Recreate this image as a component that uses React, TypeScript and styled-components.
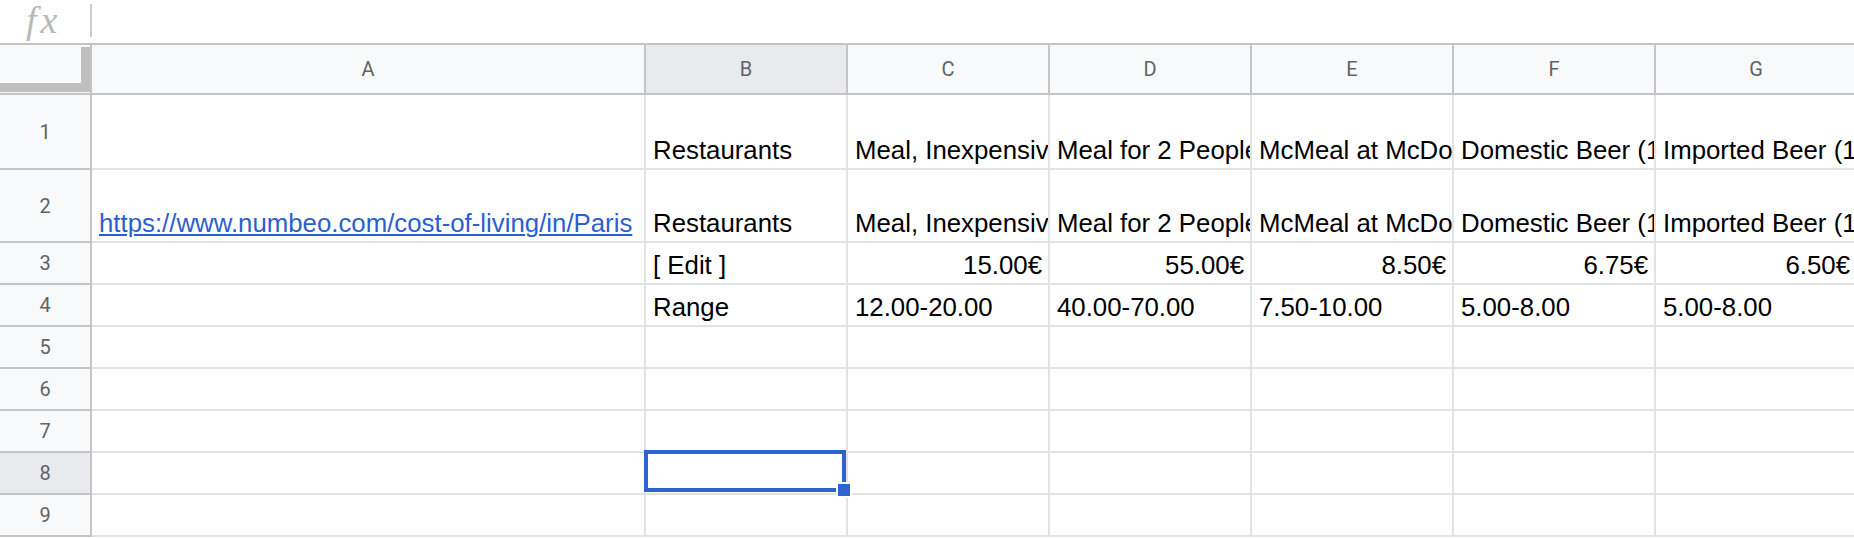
import React from "react";
import styled, { createGlobalStyle } from "styled-components";

const GlobalStyle = createGlobalStyle`
  html, body {
    margin: 0;
    padding: 0;
    background: #fff;
    overflow: hidden;
  }
  body {
    font-family: "Liberation Sans", Arial, sans-serif;
  }
`;

const Page = styled.div`
  width: 1854px;
  height: 538px;
  overflow: hidden;
  background: #fff;
`;

const FormulaBar = styled.div`
  display: flex;
  align-items: flex-start;
  height: 45px;
  box-sizing: border-box;
  border-bottom: 2px solid #c4c4c4;
`;

const FxLabel = styled.span`
  width: 90px;
  height: 43px;
  padding-left: 26px;
  box-sizing: border-box;
  font-family: "Liberation Serif", "DejaVu Serif", serif;
  font-style: italic;
  font-size: 38px;
  line-height: 40px;
  letter-spacing: 4px;
  color: #b9b9b9;
`;

const Divider = styled.div`
  width: 2px;
  height: 33px;
  margin-top: 4px;
  background: #cccccc;
`;

const Grid = styled.div`
  display: grid;
  grid-template-columns: 92px 554px repeat(6, 202px);
  grid-template-rows: 50px 75px 73px repeat(7, 42px);
`;

const Corner = styled.div`
  display: flex;
  box-sizing: border-box;
  padding-top: 2px;
  background: #f8f9fa;
  border-right: 2px solid #c4c4c4;
  border-bottom: 2px solid #c4c4c4;
`;

const FreezeBars = styled.div`
  flex: 1;
  margin-bottom: 1px;
  border-right: 9px solid #bfbfbf;
  border-bottom: 9px solid #bfbfbf;
`;

const ColHeader = styled.div<{ $selected?: boolean }>`
  display: flex;
  align-items: center;
  justify-content: center;
  box-sizing: border-box;
  background: ${p => (p.$selected ? "#e8eaed" : "#f8f9fa")};
  border-right: 2px solid #c4c4c4;
  border-bottom: 2px solid #c4c4c4;
  font-family: Roboto, "Liberation Sans", sans-serif;
  font-size: 20px;
  color: #5f6368;
`;

const RowHeader = styled(ColHeader)``;

const Cell = styled.div<{ $align?: "left" | "right"; $active?: boolean }>`
  position: relative;
  display: flex;
  align-items: flex-end;
  justify-content: ${p => (p.$align === "right" ? "flex-end" : "flex-start")};
  box-sizing: border-box;
  padding: 0 6px 3px 7px;
  border-right: 2px solid #e2e2e2;
  border-bottom: 2px solid #e2e2e2;
  overflow: ${p => (p.$active ? "visible" : "hidden")};
  z-index: ${p => (p.$active ? 2 : "auto")};
  white-space: nowrap;
  font-size: 25.8px;
  line-height: 30px;
  color: #000;
`;

const Link = styled.a`
  color: #2b5fce;
  text-decoration: underline;
  text-decoration-thickness: 2px;
  text-underline-offset: 2px;
`;

const Selection = styled.div`
  position: absolute;
  top: -3px;
  left: -2px;
  right: 0;
  bottom: 1px;
  border: 4px solid #2d64d2;
  pointer-events: none;
`;

const FillHandle = styled.div`
  position: absolute;
  right: -6px;
  bottom: -5px;
  width: 12px;
  height: 12px;
  background: #2d64d2;
  border: 2px solid #fff;
`;

type CellData = { text?: string; align?: "left" | "right"; href?: string };

const columns = ["A", "B", "C", "D", "E", "F", "G"];

const titles = [
  "Restaurants",
  "Meal, Inexpensive Restaurant",
  "Meal for 2 People, Mid-range Restaurant, Three-course",
  "McMeal at McDonalds (or Equivalent Combo Meal)",
  "Domestic Beer (1 pint draught)",
  "Imported Beer (12 oz small bottle)",
];

const url = "https://www.numbeo.com/cost-of-living/in/Paris";

const rows: CellData[][] = [
  [{}, ...titles.map(t => ({ text: t }))],
  [{ text: url, href: url }, ...titles.map(t => ({ text: t }))],
  [
    {},
    { text: "[ Edit ]" },
    ...["15.00€", "55.00€", "8.50€", "6.75€", "6.50€"].map(t => ({ text: t, align: "right" as const })),
  ],
  [
    {},
    ...["Range", "12.00-20.00", "40.00-70.00", "7.50-10.00", "5.00-8.00", "5.00-8.00"].map(t => ({ text: t })),
  ],
  [], [], [], [], [],
];

const selected = { row: 8, col: "B" };

export default function App() {
  return (
    <Page>
      <GlobalStyle />
      <FormulaBar>
        <FxLabel>fx</FxLabel>
        <Divider />
      </FormulaBar>
      <Grid>
        <Corner>
          <FreezeBars />
        </Corner>
        {columns.map(c => (
          <ColHeader key={c} $selected={c === selected.col}>
            {c}
          </ColHeader>
        ))}
        {rows.map((row, ri) => {
          const rowNum = ri + 1;
          return (
            <React.Fragment key={rowNum}>
              <RowHeader $selected={rowNum === selected.row}>{rowNum}</RowHeader>
              {columns.map((c, ci) => {
                const cell = row[ci] || {};
                const active = rowNum === selected.row && c === selected.col;
                return (
                  <Cell key={c} $align={cell.align} $active={active}>
                    {cell.href ? <Link href={cell.href}>{cell.text}</Link> : cell.text}
                    {active && (
                      <>
                        <Selection />
                        <FillHandle />
                      </>
                    )}
                  </Cell>
                );
              })}
            </React.Fragment>
          );
        })}
      </Grid>
    </Page>
  );
}
